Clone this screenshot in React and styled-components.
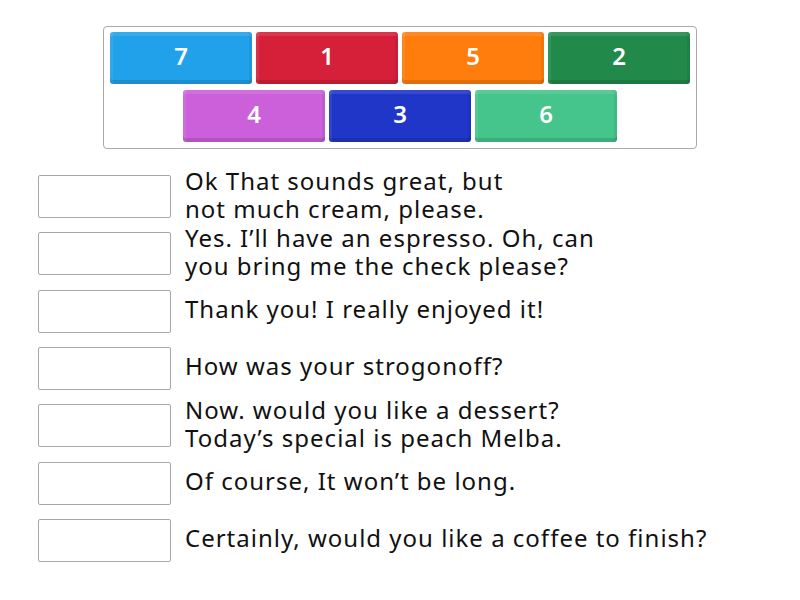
import React from "react";
import styled, { createGlobalStyle } from "styled-components";

const Global = createGlobalStyle`
  html, body { margin: 0; padding: 0; background: #fff; }
  body { font-family: "Noto Sans", sans-serif; }
`;

const Page = styled.div`
  width: 800px;
  height: 600px;
  padding-top: 26px;
  box-sizing: border-box;
`;

const Bank = styled.div`
  margin-left: 103px;
  width: 594px;
  box-sizing: border-box;
  border: 1px solid #a8a8a8;
  border-radius: 4px;
  padding: 5px 6px 6px;
  display: flex;
  flex-wrap: wrap;
  justify-content: center;
  gap: 6px 4px;
`;

const Tile = styled.div`
  width: 142px;
  height: 52px;
  box-sizing: border-box;
  padding-bottom: 5px;
  border-radius: 3px;
  background: ${(p) => p.$bg};
  box-shadow: inset 0 -4px 0 rgba(0, 0, 0, 0.12), inset 3px 0 0 rgba(255, 255, 255, 0.08),
    inset -3px 0 0 rgba(0, 0, 0, 0.06), inset 0 4px 0 rgba(255, 255, 255, 0.1);
  color: #fff;
  font-family: "Noto Sans", sans-serif;
  font-weight: 600;
  font-size: 24px;
  display: flex;
  align-items: center;
  justify-content: center;
`;

const List = styled.div`
  margin-top: 26px;
  margin-left: 38px;
  display: flex;
  flex-direction: column;
  gap: 14.33px;
`;

const Row = styled.div`
  display: flex;
  align-items: center;
  height: 43px;
  gap: 14px;
`;

const Box = styled.div`
  width: 133px;
  height: 43px;
  flex: none;
  box-sizing: border-box;
  border: 1px solid #a8a8a8;
  border-radius: 2px;
  background: #fff;
`;

const Text = styled.div`
  font-size: 24px;
  font-weight: 400;
  line-height: 28px;
  letter-spacing: 1px;
  color: #111;
  white-space: nowrap;
  margin-top: -4px;
`;

const tiles = [
  ["7", "#21a1ea"],
  ["1", "#d6203a"],
  ["5", "#ff7d0c"],
  ["2", "#218a4b"],
  ["4", "#cb60da"],
  ["3", "#1f36c9"],
  ["6", "#45c48b"],
];

const rows = [
  ["Ok That sounds great, but", "not much cream, please."],
  ["Yes. I’ll have an espresso. Oh, can", "you bring me the check please?"],
  ["Thank you! I really enjoyed it!"],
  ["How was your strogonoff?"],
  ["Now. would you like a dessert?", "Today’s special is peach Melba."],
  ["Of course, It won’t be long."],
  ["Certainly, would you like a coffee to finish?"],
];

export default function App() {
  return (
    <Page>
      <Global />
      <Bank>
        {tiles.map(([n, c]) => (
          <Tile key={n} $bg={c}>
            {n}
          </Tile>
        ))}
      </Bank>
      <List>
        {rows.map((lines, i) => (
          <Row key={i}>
            <Box />
            <Text>
              {lines.map((l, j) => (
                <React.Fragment key={j}>
                  {j > 0 && <br />}
                  {l}
                </React.Fragment>
              ))}
            </Text>
          </Row>
        ))}
      </List>
    </Page>
  );
}
